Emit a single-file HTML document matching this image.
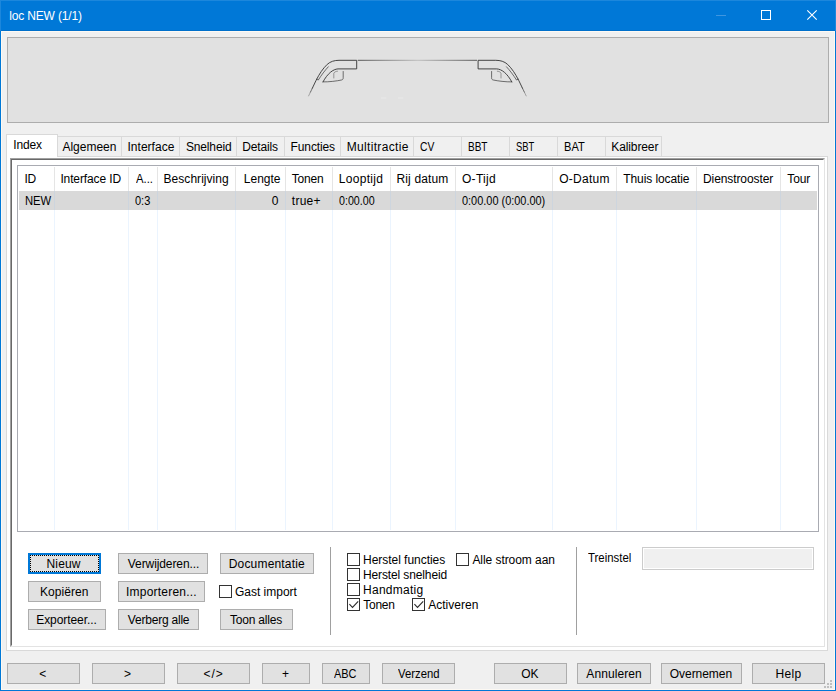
<!DOCTYPE html>
<html lang="nl"><head><meta charset="utf-8"><title>loc NEW (1/1)</title>
<style>
html,body{margin:0;padding:0;}
body{width:836px;height:691px;position:relative;overflow:hidden;background:#f0f0f0;font-family:"Liberation Sans",sans-serif;font-size:12px;color:#000;}
body>div,.abs,.t{position:absolute;box-sizing:border-box;}
.t{white-space:pre;line-height:14px;height:14px;transform-origin:0 0;}
.tb{background:#0078d7;}
.wb{background:#0078d7;}
.wi{border:1px solid #fdf9f3;}
.tbl{background:#0070cb;}
.tbe{background:#1c87dc;}
.imgp{background:#e1e1e1;border:1px solid #adadad;}
.tab{background:#f0f0f0;border:1px solid #d9d9d9;}
.tabsel{background:#fff;border:1px solid #d9d9d9;border-bottom:none;}
.pane{background:#fff;border:1px solid #d9d9d9;}
.sunk{border:1px solid;border-color:#a0a0a0 #e3e3e3 #e3e3e3 #a0a0a0;}
.sunk2{border:1px solid;border-color:#696969 #fff #fff #696969;}
.lv{background:#fff;border:1px solid #a9abb2;}
.rowsel{background:#d9d9d9;}
.hsep{background:#e5e5e5;}
.bsep{background:#ebf4fe;}
.rsep{background:#cdd5de;}
.btn{background:#e1e1e1;border:1px solid #adadad;}
.btn.def{border:2px solid #0078d7;}
.focus{border:1px dotted #000;}
.cb{background:#fff;border:1px solid #333;}
.vsep{background:#a0a0a0;}
.fld{background:#f0f0f0;border:1px solid #ccc;box-shadow:inset 0 0 0 1px #fff;}
.grip{background:#bfbfbf;}
</style></head><body>
<div class="tb" style="left:0px;top:0px;width:836px;height:31px;"></div>
<svg class="abs" style="left:700px;top:0" width="136" height="31" viewBox="0 0 136 31">
<rect x="16" y="15" width="10" height="1" fill="#3f96e0"/>
<rect x="61.5" y="10.5" width="9" height="9" fill="none" stroke="#fff" stroke-width="1"/>
<path d="M107.3 10.3 L116.7 19.7 M116.7 10.3 L107.3 19.7" stroke="#fff" stroke-width="1.1" fill="none"/>
</svg>
<div class="imgp" style="left:7px;top:37px;width:822px;height:86px;"></div>
<svg class="abs" style="left:300px;top:50px" width="240" height="60" viewBox="300 50 240 60" fill="none" stroke="#333" stroke-width="0.8" stroke-linecap="round" stroke-linejoin="round">
<defs><linearGradient id="rg" x1="358" x2="478" y1="0" y2="0" gradientUnits="userSpaceOnUse"><stop offset="0" stop-color="#333"/><stop offset="0.5" stop-color="#333" stop-opacity="0.25"/><stop offset="1" stop-color="#333"/></linearGradient></defs>
<g>
<path d="M308.6 95.9 L310.5 92" stroke-opacity="0.45" stroke-width="0.8"/>
<path d="M310.5 92 L312.4 88.1" stroke-opacity="0.75" stroke-width="0.85"/>
<path d="M312.4 88.1 C313.8 85.1 315 82.6 316.2 80.2 C319.3 74 322.8 68.6 327.2 64.4 C330.3 61.5 334.5 60.3 339 60.3 L356.7 60.3 L356.7 68.9 L338 68.9 C333 69.2 327.5 73.5 323 81.9" stroke-width="0.9"/>
<path d="M328.3 66.8 C325 70.3 321.2 75.4 318.3 80 L316.5 79.2" stroke-opacity="0.85"/>
<path d="M323 81.9 C329 82 337 81 341.5 80 C343 79.6 343.2 79 343.2 77.5 L343.2 71.5" stroke-opacity="0.85"/>
<path d="M333.8 78 L333.8 73.5 C334.2 72 335.8 71.3 337.5 71.2" stroke-opacity="0.55"/>
</g>
<g transform="translate(834.8 0) scale(-1 1)">
<path d="M308.6 95.9 L310.5 92" stroke-opacity="0.45" stroke-width="0.8"/>
<path d="M310.5 92 L312.4 88.1" stroke-opacity="0.75" stroke-width="0.85"/>
<path d="M312.4 88.1 C313.8 85.1 315 82.6 316.2 80.2 C319.3 74 322.8 68.6 327.2 64.4 C330.3 61.5 334.5 60.3 339 60.3 L356.7 60.3 L356.7 68.9 L338 68.9 C333 69.2 327.5 73.5 323 81.9" stroke-width="0.9"/>
<path d="M328.3 66.8 C325 70.3 321.2 75.4 318.3 80 L316.5 79.2" stroke-opacity="0.85"/>
<path d="M323 81.9 C329 82 337 81 341.5 80 C343 79.6 343.2 79 343.2 77.5 L343.2 71.5" stroke-opacity="0.85"/>
<path d="M333.8 78 L333.8 73.5 C334.2 72 335.8 71.3 337.5 71.2" stroke-opacity="0.55"/>
</g>
<path d="M358.2 60.3 L476.6 60.3" stroke="url(#rg)"/>
<path d="M381.5 98 L386 98 M398.5 98 L403 98" stroke="#fff" stroke-opacity="0.3" stroke-width="1"/>
</svg>
<div class="tab" style="left:57px;top:136px;width:65px;height:21px;"></div>
<div class="tab" style="left:121px;top:136px;width:59px;height:21px;"></div>
<div class="tab" style="left:179px;top:136px;width:58px;height:21px;"></div>
<div class="tab" style="left:236px;top:136px;width:49px;height:21px;"></div>
<div class="tab" style="left:284px;top:136px;width:57px;height:21px;"></div>
<div class="tab" style="left:340px;top:136px;width:74px;height:21px;"></div>
<div class="tab" style="left:413px;top:136px;width:49px;height:21px;"></div>
<div class="tab" style="left:461px;top:136px;width:49px;height:21px;"></div>
<div class="tab" style="left:509px;top:136px;width:49px;height:21px;"></div>
<div class="tab" style="left:557px;top:136px;width:49px;height:21px;"></div>
<div class="tab" style="left:605px;top:136px;width:57px;height:21px;"></div>
<div class="pane" style="left:6px;top:156px;width:822px;height:495px;"></div>
<div class="tabsel" style="left:6px;top:134px;width:52px;height:23px;"></div>
<div class="sunk" style="left:10px;top:158px;width:815px;height:489px;"></div>
<div class="sunk2" style="left:11px;top:159px;width:813px;height:487px;"></div>
<div class="lv" style="left:17px;top:165px;width:802px;height:367px;"></div>
<div class="rowsel" style="left:19px;top:191px;width:798px;height:19px;"></div>
<div class="hsep" style="left:54px;top:167px;width:1px;height:24px;"></div>
<div class="bsep" style="left:54px;top:191px;width:1px;height:339px;"></div>
<div class="rsep" style="left:54px;top:191px;width:1px;height:19px;"></div>
<div class="hsep" style="left:128px;top:167px;width:1px;height:24px;"></div>
<div class="bsep" style="left:128px;top:191px;width:1px;height:339px;"></div>
<div class="rsep" style="left:128px;top:191px;width:1px;height:19px;"></div>
<div class="hsep" style="left:157px;top:167px;width:1px;height:24px;"></div>
<div class="bsep" style="left:157px;top:191px;width:1px;height:339px;"></div>
<div class="rsep" style="left:157px;top:191px;width:1px;height:19px;"></div>
<div class="hsep" style="left:235px;top:167px;width:1px;height:24px;"></div>
<div class="bsep" style="left:235px;top:191px;width:1px;height:339px;"></div>
<div class="rsep" style="left:235px;top:191px;width:1px;height:19px;"></div>
<div class="hsep" style="left:285px;top:167px;width:1px;height:24px;"></div>
<div class="bsep" style="left:285px;top:191px;width:1px;height:339px;"></div>
<div class="rsep" style="left:285px;top:191px;width:1px;height:19px;"></div>
<div class="hsep" style="left:332px;top:167px;width:1px;height:24px;"></div>
<div class="bsep" style="left:332px;top:191px;width:1px;height:339px;"></div>
<div class="rsep" style="left:332px;top:191px;width:1px;height:19px;"></div>
<div class="hsep" style="left:390px;top:167px;width:1px;height:24px;"></div>
<div class="bsep" style="left:390px;top:191px;width:1px;height:339px;"></div>
<div class="rsep" style="left:390px;top:191px;width:1px;height:19px;"></div>
<div class="hsep" style="left:455px;top:167px;width:1px;height:24px;"></div>
<div class="bsep" style="left:455px;top:191px;width:1px;height:339px;"></div>
<div class="rsep" style="left:455px;top:191px;width:1px;height:19px;"></div>
<div class="hsep" style="left:552px;top:167px;width:1px;height:24px;"></div>
<div class="bsep" style="left:552px;top:191px;width:1px;height:339px;"></div>
<div class="rsep" style="left:552px;top:191px;width:1px;height:19px;"></div>
<div class="hsep" style="left:616px;top:167px;width:1px;height:24px;"></div>
<div class="bsep" style="left:616px;top:191px;width:1px;height:339px;"></div>
<div class="rsep" style="left:616px;top:191px;width:1px;height:19px;"></div>
<div class="hsep" style="left:696px;top:167px;width:1px;height:24px;"></div>
<div class="bsep" style="left:696px;top:191px;width:1px;height:339px;"></div>
<div class="rsep" style="left:696px;top:191px;width:1px;height:19px;"></div>
<div class="hsep" style="left:780px;top:167px;width:1px;height:24px;"></div>
<div class="bsep" style="left:780px;top:191px;width:1px;height:339px;"></div>
<div class="rsep" style="left:780px;top:191px;width:1px;height:19px;"></div>
<div class="btn def" style="left:28px;top:553px;width:73px;height:21px;"></div>
<div class="focus" style="left:30px;top:555px;width:69px;height:17px;"></div>
<div class="btn" style="left:28px;top:581px;width:73px;height:21px;"></div>
<div class="btn" style="left:28px;top:609px;width:78px;height:21px;"></div>
<div class="btn" style="left:118px;top:553px;width:90px;height:21px;"></div>
<div class="btn" style="left:118px;top:581px;width:87px;height:21px;"></div>
<div class="btn" style="left:118px;top:609px;width:81px;height:21px;"></div>
<div class="btn" style="left:220px;top:553px;width:94px;height:21px;"></div>
<div class="btn" style="left:220px;top:609px;width:73px;height:21px;"></div>
<div class="btn" style="left:7px;top:663px;width:73px;height:21px;"></div>
<div class="btn" style="left:92px;top:663px;width:73px;height:21px;"></div>
<div class="btn" style="left:177px;top:663px;width:73px;height:21px;"></div>
<div class="btn" style="left:262px;top:663px;width:48px;height:21px;"></div>
<div class="btn" style="left:322px;top:663px;width:48px;height:21px;"></div>
<div class="btn" style="left:382px;top:663px;width:73px;height:21px;"></div>
<div class="btn" style="left:494px;top:663px;width:73px;height:21px;"></div>
<div class="btn" style="left:577px;top:663px;width:74px;height:21px;"></div>
<div class="btn" style="left:661px;top:663px;width:81px;height:21px;"></div>
<div class="btn" style="left:752px;top:663px;width:73px;height:21px;"></div>
<div class="cb" style="left:219px;top:585px;width:13px;height:13px;"></div>
<div class="cb" style="left:347px;top:553px;width:13px;height:13px;"></div>
<div class="cb" style="left:456px;top:553px;width:13px;height:13px;"></div>
<div class="cb" style="left:347px;top:568px;width:13px;height:13px;"></div>
<div class="cb" style="left:347px;top:583px;width:13px;height:13px;"></div>
<div class="cb" style="left:347px;top:598px;width:13px;height:13px;"></div><svg class="abs" style="left:347px;top:598px" width="13" height="13" viewBox="0 0 13 13"><path d="M2.4 6.2 L5.5 9.4 L11.2 3.3" fill="none" stroke="#2b2b2b" stroke-width="1.1"/></svg>
<div class="cb" style="left:412px;top:598px;width:13px;height:13px;"></div><svg class="abs" style="left:412px;top:598px" width="13" height="13" viewBox="0 0 13 13"><path d="M2.4 6.2 L5.5 9.4 L11.2 3.3" fill="none" stroke="#2b2b2b" stroke-width="1.1"/></svg>
<div class="vsep" style="left:330px;top:547px;width:1px;height:88px;"></div>
<div class="vsep" style="left:576px;top:547px;width:1px;height:88px;"></div>
<div class="fld" style="left:642px;top:547px;width:172px;height:23px;"></div>
<div class="grip" style="left:830px;top:680px;width:2px;height:2px;"></div>
<div class="grip" style="left:827px;top:683px;width:2px;height:2px;"></div>
<div class="grip" style="left:830px;top:683px;width:2px;height:2px;"></div>
<div class="grip" style="left:824px;top:686px;width:2px;height:2px;"></div>
<div class="grip" style="left:827px;top:686px;width:2px;height:2px;"></div>
<div class="grip" style="left:830px;top:686px;width:2px;height:2px;"></div>
<div class="wi" style="left:1px;top:31px;width:834px;height:659px;"></div>
<div class="tbl" style="left:0px;top:30px;width:836px;height:1px;"></div>
<div class="tbe" style="left:0px;top:0px;width:836px;height:1px;"></div>
<div class="tbe" style="left:0px;top:0px;width:1px;height:31px;"></div>
<div class="tbe" style="left:835px;top:0px;width:1px;height:31px;"></div>
<div class="wb" style="left:0px;top:31px;width:1px;height:660px;"></div>
<div class="wb" style="left:835px;top:31px;width:1px;height:660px;"></div>
<div class="wb" style="left:0px;top:690px;width:836px;height:1px;"></div>
<span class="t" id="t0" style="left:9.20px;top:9px;letter-spacing:-0.157px;color:#fff;">loc NEW (1/1)</span>
<span class="t" id="t1" style="left:13.20px;top:138px;letter-spacing:-0.114px;">Index</span>
<span class="t" id="t2" style="left:62.50px;top:140px;letter-spacing:-0.023px;">Algemeen</span>
<span class="t" id="t3" style="left:127.50px;top:140px;letter-spacing:0.016px;">Interface</span>
<span class="t" id="t4" style="left:185.90px;top:140px;letter-spacing:-0.140px;">Snelheid</span>
<span class="t" id="t5" style="left:242.35px;top:140px;letter-spacing:-0.155px;">Details</span>
<span class="t" id="t6" style="left:290.55px;top:140px;letter-spacing:-0.115px;">Functies</span>
<span class="t" id="t7" style="left:346.65px;top:140px;letter-spacing:0.333px;">Multitractie</span>
<span class="t" id="t8" style="left:420.38px;top:140px;transform:scaleX(0.859);">CV</span>
<span class="t" id="t9" style="left:467.71px;top:140px;transform:scaleX(0.8349);">BBT</span>
<span class="t" id="t10" style="left:516.31px;top:140px;transform:scaleX(0.7829);">SBT</span>
<span class="t" id="t11" style="left:563.72px;top:140px;transform:scaleX(0.9216);">BAT</span>
<span class="t" id="t12" style="left:611.25px;top:140px;letter-spacing:-0.110px;">Kalibreer</span>
<span class="t" id="t13" style="left:24.40px;top:172px;letter-spacing:-0.234px;">ID</span>
<span class="t" id="t14" style="left:60.40px;top:172px;letter-spacing:-0.124px;">Interface ID</span>
<span class="t" id="t15" style="left:135.60px;top:172px;transform:scaleX(0.9396);">A...</span>
<span class="t" id="t16" style="left:163.55px;top:172px;letter-spacing:0.044px;">Beschrijving</span>
<span class="t" id="t17" style="left:243.85px;top:172px;letter-spacing:-0.006px;">Lengte</span>
<span class="t" id="t18" style="left:291.75px;top:172px;letter-spacing:-0.168px;">Tonen</span>
<span class="t" id="t19" style="left:338.65px;top:172px;letter-spacing:0.334px;">Looptijd</span>
<span class="t" id="t20" style="left:396.45px;top:172px;letter-spacing:0.152px;">Rij datum</span>
<span class="t" id="t21" style="left:461.95px;top:172px;letter-spacing:0.311px;">O-Tijd</span>
<span class="t" id="t22" style="left:559.25px;top:172px;letter-spacing:0.270px;">O-Datum</span>
<span class="t" id="t23" style="left:623.25px;top:172px;letter-spacing:-0.091px;">Thuis locatie</span>
<span class="t" id="t24" style="left:703.05px;top:172px;letter-spacing:-0.101px;">Dienstrooster</span>
<span class="t" id="t25" style="left:787.35px;top:172px;letter-spacing:-0.166px;">Tour</span>
<span class="t" id="t26" style="left:24.61px;top:194px;transform:scaleX(0.9363);">NEW</span>
<span class="t" id="t27" style="left:135.19px;top:194px;transform:scaleX(0.9167);">0:3</span>
<span class="t" id="t28" style="left:271.80px;top:194px;">0</span>
<span class="t" id="t29" style="left:291.85px;top:194px;letter-spacing:0.256px;">true+</span>
<span class="t" id="t30" style="left:339.20px;top:194px;transform:scaleX(0.8911);">0:00.00</span>
<span class="t" id="t31" style="left:462.09px;top:194px;transform:scaleX(0.9108);">0:00.00 (0:00.00)</span>
<span class="t" id="t32" style="left:46.55px;top:557px;letter-spacing:0.143px;">Nieuw</span>
<span class="t" id="t33" style="left:39.95px;top:585px;letter-spacing:0.070px;">Kopiëren</span>
<span class="t" id="t34" style="left:36.25px;top:613px;letter-spacing:-0.076px;">Exporteer...</span>
<span class="t" id="t35" style="left:127.85px;top:557px;letter-spacing:-0.098px;">Verwijderen...</span>
<span class="t" id="t36" style="left:126.00px;top:585px;letter-spacing:0.213px;">Importeren...</span>
<span class="t" id="t37" style="left:127.85px;top:613px;letter-spacing:-0.215px;">Verberg alle</span>
<span class="t" id="t38" style="left:228.75px;top:557px;letter-spacing:0.176px;">Documentatie</span>
<span class="t" id="t39" style="left:230.05px;top:613px;letter-spacing:-0.209px;">Toon alles</span>
<span class="t" id="t40" style="left:234.90px;top:585px;letter-spacing:-0.003px;">Gast import</span>
<span class="t" id="t41" style="left:363.05px;top:553px;letter-spacing:-0.037px;">Herstel functies</span>
<span class="t" id="t42" style="left:472.40px;top:553px;letter-spacing:-0.057px;">Alle stroom aan</span>
<span class="t" id="t43" style="left:363.05px;top:568px;letter-spacing:-0.131px;">Herstel snelheid</span>
<span class="t" id="t44" style="left:363.05px;top:583px;letter-spacing:0.268px;">Handmatig</span>
<span class="t" id="t45" style="left:363.25px;top:598px;letter-spacing:-0.243px;">Tonen</span>
<span class="t" id="t46" style="left:428.20px;top:598px;letter-spacing:0.032px;">Activeren</span>
<span class="t" id="t47" style="left:588.46px;top:551px;transform:scaleX(0.9494);">Treinstel</span>
<span class="t" id="t48" style="left:39.20px;top:667px;">&lt;</span>
<span class="t" id="t49" style="left:123.90px;top:667px;">&gt;</span>
<span class="t" id="t50" style="left:203.55px;top:667px;letter-spacing:0.979px;">&lt;/&gt;</span>
<span class="t" id="t51" style="left:281.90px;top:667px;">+</span>
<span class="t" id="t52" style="left:334.40px;top:667px;transform:scaleX(0.911);">ABC</span>
<span class="t" id="t53" style="left:398.35px;top:667px;transform:scaleX(0.9431);">Verzend</span>
<span class="t" id="t54" style="left:521.15px;top:667px;letter-spacing:-0.084px;">OK</span>
<span class="t" id="t55" style="left:586.30px;top:667px;letter-spacing:0.083px;">Annuleren</span>
<span class="t" id="t56" style="left:669.85px;top:667px;letter-spacing:-0.059px;">Overnemen</span>
<span class="t" id="t57" style="left:775.45px;top:667px;letter-spacing:0.348px;">Help</span>
</body></html>
